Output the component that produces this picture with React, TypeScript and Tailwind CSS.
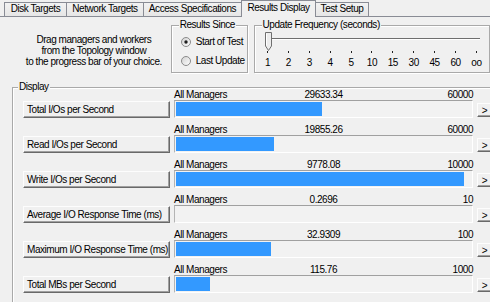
import React from 'react';

type Row = { label: string; value: string; max: string; fill: number };

const ROWS: Row[] = [
  { label: 'Total I/Os per Second', value: '29633.34', max: '60000', fill: 146 },
  { label: 'Read I/Os per Second', value: '19855.26', max: '60000', fill: 98 },
  { label: 'Write I/Os per Second', value: '9778.08', max: '10000', fill: 288 },
  { label: 'Average I/O Response Time (ms)', value: '0.2696', max: '10', fill: 0 },
  { label: 'Maximum I/O Response Time (ms)', value: '32.9309', max: '100', fill: 95 },
  { label: 'Total MBs per Second', value: '115.76', max: '1000', fill: 34 },
];

const TICKS = ['1', '2', '3', '4', '5', '10', '15', '30', '45', '60', 'oo'];

const TABS = [
  { name: 'Disk Targets', w: 'w-[63px]' },
  { name: 'Network Targets', w: 'w-[78px]' },
  { name: 'Access Specifications', w: 'w-[99px]' },
  { name: 'Results Display', w: 'w-[75px]', active: true },
  { name: 'Test Setup', w: 'w-[54px]' },
];

const GroupBox: React.FC<{ title: string; className?: string; titleLeft?: string; children?: React.ReactNode }> = ({
  title,
  className = '',
  titleLeft = 'left-[7px]',
  children,
}) => (
  <div
    className={`relative border border-[#a9a9a9] shadow-[inset_1px_1px_0_#fff,1px_1px_0_#fff] ${className}`}
  >
    <span className={`absolute -top-[7px] ${titleLeft} px-[1px] bg-[#f0f0f0] leading-[11px] whitespace-nowrap`}>
      {title}
    </span>
    {children}
  </div>
);

const Radio: React.FC<{ checked?: boolean; id: string; label: string }> = ({ checked, id, label }) => (
  <div className="flex items-center h-[13px] gap-[5px]">
    <svg className="shrink-0" width="10" height="10" viewBox="0 0 10 10">
      <defs>
        <linearGradient id={id} x1="0" y1="0" x2="1" y2="1">
          <stop offset="0" stopColor="#d0d0d0" />
          <stop offset="1" stopColor="#ffffff" />
        </linearGradient>
      </defs>
      <circle cx="5" cy="5" r="4.5" fill={`url(#${id})`} stroke="#8a8a8a" strokeWidth="1" />
      {checked && <circle cx="5" cy="5" r="1.7" fill="#1e1e1e" />}
    </svg>
    <span className="whitespace-nowrap">{label}</span>
  </div>
);

const RaisedButton: React.FC<{ className?: string; children?: React.ReactNode }> = ({ className = '', children }) => (
  <div
    className={`bg-[#f0f0f0] border border-t-[#fdfdfd] border-l-[#fdfdfd] border-r-[#696969] border-b-[#696969] shadow-[inset_-1px_-1px_0_#a0a0a0] ${className}`}
  >
    {children}
  </div>
);

const App: React.FC = () => {
  return (
    <div className="w-[490px] h-[302px] overflow-hidden bg-[#f0f0f0] text-black text-[10px] leading-[11px] tracking-[-0.45px] font-['Liberation_Sans',Arial,sans-serif]">
      {/* tab strip */}
      <div className="flex items-end h-[16px] pl-[5px]">
        {TABS.map(t =>
          t.active ? (
            <div
              key={t.name}
              className={`${t.w} h-[17px] -mb-[1px] -ml-[1px] relative z-10 bg-[#f0f0f0] border border-b-0 border-[#898c95] flex justify-center pt-[1px] whitespace-nowrap`}
            >
              {t.name}
            </div>
          ) : (
            <div
              key={t.name}
              className={`${t.w} h-[14px] -ml-[1px] bg-gradient-to-b from-[#f2f2f2] to-[#e6e6e6] border border-b-0 border-[#898c95] flex justify-center pt-[1px] leading-[10px] whitespace-nowrap`}
            >
              {t.name}
            </div>
          )
        )}
      </div>

      {/* panel */}
      <div className="border-t border-[#898c95] h-[286px]">
        <div className="flex mt-[8px] pl-[12px]">
          <div className="w-[161px] h-[48px] pl-[5px] pt-[2px] flex flex-col items-center justify-center text-center">
            <div>Drag managers and workers</div>
            <div>from the Topology window</div>
            <div className="whitespace-nowrap">to the progress bar of your choice.</div>
          </div>

          <GroupBox title="Results Since" className="w-[78px] h-[48px]" titleLeft="left-[7px]">
            <div className="flex flex-col gap-[6px] pt-[9px] pl-[9px]">
              <Radio checked id="rad-start" label="Start of Test" />
              <Radio id="rad-last" label="Last Update" />
            </div>
          </GroupBox>

          <GroupBox title="Update Frequency (seconds)" className="w-[240px] h-[48px] ml-[6px]" titleLeft="left-[7px]">
            <div className="relative h-[19px] mt-[6px]">
              <div className="pt-[6px] ml-[12px]">
                <div className="w-[213px] h-[2px] border-t border-[#6e6e6e] border-b border-b-white" />
              </div>
              <svg className="absolute left-[10px] top-0" width="7" height="19" viewBox="0 0 7 19">
                <polygon points="0.5,0.5 6.5,0.5 6.5,14 3.5,18.5 0.5,14" fill="#ececec" stroke="#6f6f6f" strokeWidth="1" />
                <line x1="1.5" y1="1.5" x2="1.5" y2="13.5" stroke="#ffffff" />
              </svg>
            </div>
            <div className="flex pl-[2.5px] h-[3px]">
              {TICKS.map(t => (
                <div key={t} className="w-[20.9px] flex justify-center">
                  <div className="w-[1px] h-[2px] bg-[#222]" />
                </div>
              ))}
            </div>
            <div className="flex pl-[2.5px] mt-[3px]">
              {TICKS.map(t => (
                <div key={t} className="w-[20.9px] text-center">
                  {t}
                </div>
              ))}
            </div>
          </GroupBox>
        </div>

        <GroupBox title="Display" className="w-[485px] h-[230px] ml-[12px] mt-[14px]" titleLeft="left-[5px]">
          <div className="flex flex-col gap-[6px] pt-[1px] pl-[10px]">
            {ROWS.map(r => (
              <div key={r.label} className="flex items-end">
                <RaisedButton className="w-[147px] h-[17px] pl-[3px] flex items-center whitespace-nowrap shrink-0">
                  {r.label}
                </RaisedButton>
                <div className="w-[299px] ml-[4px] shrink-0">
                  <div className="grid grid-cols-[1fr_auto_1fr] h-[11px]">
                    <span className="whitespace-nowrap">All Managers</span>
                    <span>{r.value}</span>
                    <span className="text-right">{r.max}</span>
                  </div>
                  <div className="h-[18px] border border-t-[#a0a0a0] border-l-[#b4b4b4] border-r-white border-b-white bg-[#f2f2f2] p-[1px]">
                    {r.fill > 0 && <div className="h-full bg-[#3399ff]" style={{ width: r.fill }} />}
                  </div>
                </div>
                <RaisedButton className="w-[15px] h-[14px] ml-[4px] mb-[1px] flex items-center justify-center shrink-0">
                  &gt;
                </RaisedButton>
              </div>
            ))}
          </div>
        </GroupBox>
      </div>
    </div>
  );
};

export default App;
